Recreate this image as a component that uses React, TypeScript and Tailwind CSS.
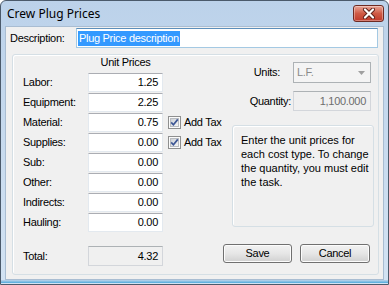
import React from 'react';

const sans = "font-['Liberation_Sans',Arial,sans-serif] text-[11px] tracking-[-0.3px] text-black";

const rows = [
  { label: 'Labor:', value: '1.25' },
  { label: 'Equipment:', value: '2.25' },
  { label: 'Material:', value: '0.75', tax: true },
  { label: 'Supplies:', value: '0.00', tax: true },
  { label: 'Sub:', value: '0.00' },
  { label: 'Other:', value: '0.00' },
  { label: 'Indirects:', value: '0.00' },
  { label: 'Hauling:', value: '0.00' },
];

const inputBox = "border border-[#e3e9ef] border-t-[#abadb3] bg-white flex items-center justify-end pr-[4px]";
const grayBox = "border border-[#d3d6db] border-t-[#adb2b5] bg-[#f0f0f0] flex items-center justify-end pr-[4px]";
const buttonClasses = "h-[19px] rounded-[3px] border border-[#707070] bg-gradient-to-b from-[#f2f2f2] via-[#e6e6e6] to-[#d0d0d0] shadow-[inset_0_0_0_1px_#fcfcfc] flex items-center justify-center";

const CheckBox: React.FC = () => (
  <svg width="13" height="13" viewBox="0 0 13 13" className="shrink-0">
    <defs>
      <linearGradient id="cb" x1="0" y1="0" x2="1" y2="1">
        <stop offset="0" stopColor="#cbcfd5" />
        <stop offset="1" stopColor="#f7f7f7" />
      </linearGradient>
    </defs>
    <rect x="0.5" y="0.5" width="12" height="12" fill="#fbfbfb" stroke="#8e8f8f" />
    <rect x="2.5" y="2.5" width="8" height="8" fill="url(#cb)" stroke="#b9bcc1" />
    <path d="M3.2 6.4 L5.4 8.8 L9.8 3.4" stroke="#3e5795" strokeWidth="1.7" fill="none" />
  </svg>
);

const CloseButton: React.FC = () => (
  <div className="w-[31px] h-[17px] rounded-[3px] border border-[#6e2a22] bg-gradient-to-b from-[#e8a597] via-[#cf5a45] to-[#c0392a] shadow-[inset_0_0_0_1px_rgba(255,255,255,0.35)] flex items-center justify-center">
    <svg width="14" height="11" viewBox="0 0 14 11">
      <path d="M3 1.5 L11 9.5 M11 1.5 L3 9.5" stroke="#5b1f18" strokeWidth="4" strokeLinecap="round" />
      <path d="M3 1.5 L11 9.5 M11 1.5 L3 9.5" stroke="#ffffff" strokeWidth="2.2" strokeLinecap="round" />
    </svg>
  </div>
);

export default function App() {
  return (
    <div className="w-[389px] h-[285px] flex flex-col border border-[#4b5a6b] rounded-t-[6px] bg-gradient-to-b from-[#bcd2ea] to-[#d3e3f3] overflow-hidden">
      {/* title bar */}
      <div className="h-[25px] flex items-center justify-between pl-[6px] pr-[4px]">
        <span className="font-['Noto_Sans',sans-serif] text-[12px] text-black">Crew Plug Prices</span>
        <CloseButton />
      </div>

      {/* client area */}
      <div className={`mx-[4px] h-[254px] bg-[#f0f0f0] border border-[#a9bdd2] flex flex-col ${sans}`}>
        <div className="mt-[1px] flex items-center">
          <span className="w-[70px] pl-[4px]">Description:</span>
          <div className="w-[302px] h-[20px] border border-[#a4c9e3] border-t-[#5d8fbb] bg-white flex items-center pl-[1px]">
            <span className="bg-[#3399ff] text-white leading-[15px] px-[1px]">Plug Price description</span>
          </div>
        </div>

        <div className="mt-[6px] ml-[6px] w-[367px] h-[221px] rounded-[3px] border border-[#d5dfe5] shadow-[inset_1px_1px_0_#ffffff] flex">
          {/* left column */}
          <div className="w-[210px] flex flex-col">
            <div className="h-[17px] flex">
              <span className="ml-[75px] w-[75px] text-center leading-[15px]">Unit Prices</span>
            </div>
            {rows.map((r) => (
              <div key={r.label} className="h-[20px] flex items-center">
                <span className="w-[75px] pl-[10px]">{r.label}</span>
                <div className={`w-[75px] h-[19px] ${inputBox}`}>{r.value}</div>
                {r.tax && (
                  <div className="flex items-center ml-[5px]">
                    <CheckBox />
                    <span className="ml-[3px]">Add Tax</span>
                  </div>
                )}
              </div>
            ))}
            <div className="mt-[14px] h-[20px] flex items-center">
              <span className="w-[75px] pl-[10px]">Total:</span>
              <div className={`w-[75px] h-[20px] ${grayBox}`}>4.32</div>
            </div>
          </div>

          {/* right column */}
          <div className="w-[153px] flex flex-col">
            <div className="mt-[7px] h-[21px] flex items-center justify-end pr-[5px]">
              <span className="mr-[13px]">Units:</span>
              <div className="w-[78px] h-[21px] border border-[#adb2b5] bg-[#f4f4f4] flex items-center justify-between pl-[3px] pr-[5px] text-[#8a8a8a]">
                <span>L.F.</span>
                <svg width="7" height="4" viewBox="0 0 7 4">
                  <path d="M0 0 L7 0 L3.5 4 Z" fill="#a0a0a0" />
                </svg>
              </div>
            </div>
            <div className="mt-[8px] h-[20px] flex items-center justify-end pr-[5px]">
              <span className="mr-[2px]">Quantity:</span>
              <div className={`w-[78px] h-[20px] ${grayBox} text-[#6d6d6d]`}>1,100.000</div>
            </div>
            <div className="mt-[14px] ml-[9px] w-[142px] h-[102px] rounded-[3px] border border-[#d5dfe5] shadow-[inset_1px_1px_0_#ffffff] pl-[8px] pt-[7px] leading-[14px] tracking-normal whitespace-nowrap">
              Enter the unit prices for<br />
              each cost type. To change<br />
              the quantity, you must edit<br />
              the task.
            </div>
            <div className="mt-[17px] flex">
              <div className={`w-[69px] ${buttonClasses}`}>Save</div>
              <div className={`ml-[8px] w-[70px] ${buttonClasses}`}>Cancel</div>
            </div>
          </div>
        </div>
      </div>

      {/* bottom frame */}
      <div className="h-[3px] bg-gradient-to-b from-[#bcd4ea] to-[#4aa9dc]" />
    </div>
  );
}
